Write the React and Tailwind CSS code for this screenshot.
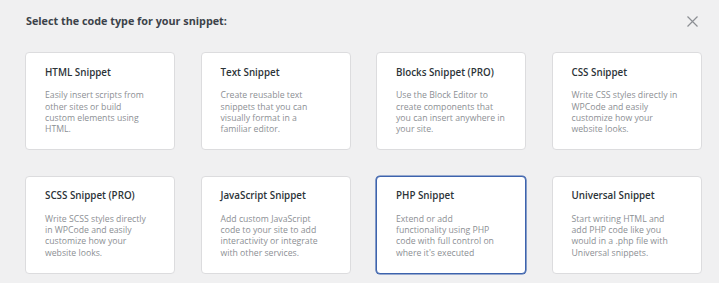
import React from 'react';

const SNIPPETS = [
  { title: 'HTML Snippet', lines: ['Easily insert scripts from', 'other sites or build', 'custom elements using', 'HTML.'] },
  { title: 'Text Snippet', lines: ['Create reusable text', 'snippets that you can', 'visually format in a', 'familiar editor.'] },
  { title: 'Blocks Snippet (PRO)', lines: ['Use the Block Editor to', 'create components that', 'you can insert anywhere in', 'your site.'] },
  { title: 'CSS Snippet', lines: ['Write CSS styles directly in', 'WPCode and easily', 'customize how your', 'website looks.'] },
  { title: 'SCSS Snippet (PRO)', lines: ['Write SCSS styles directly', 'in WPCode and easily', 'customize how your', 'website looks.'] },
  { title: 'JavaScript Snippet', lines: ['Add custom JavaScript', 'code to your site to add', 'interactivity or integrate', 'with other services.'] },
  { title: 'PHP Snippet', lines: ['Extend or add', 'functionality using PHP', 'code with full control on', "where it's executed"], active: true },
  { title: 'Universal Snippet', lines: ['Start writing HTML and', 'add PHP code like you', 'would in a .php file with', 'Universal snippets.'] },
];

function SnippetCard({ title, lines, active }) {
  return (
    <div
      className={
        'h-[98px] rounded-[4px] bg-white pl-[19px] pt-[12.5px] ' +
        (active ? 'border border-[#3d63ad] shadow-[0_0_0_0.6px_#3d63ad]' : 'border border-[#dcdcde]')
      }
    >
      <h3 className="whitespace-nowrap text-[9.8px] font-semibold leading-[14px] text-[#2c3338]">{title}</h3>
      <p className="mt-[10.75px] text-[8.7px] leading-[11.35px] text-[#8c8f94]">
        {lines.map((l) => (
          <span key={l} className="block whitespace-nowrap">{l}</span>
        ))}
      </p>
    </div>
  );
}

export default function App() {
  return (
    <div className="h-[283px] w-[719px] bg-[#f0f0f1] font-['Open_Sans',sans-serif]">
      <div className="flex items-center justify-between pl-[26px] pr-[21px] pt-[12px]">
        <h2 className="text-[10.8px] font-bold leading-[18px] text-[#3c434a]">Select the code type for your snippet:</h2>
        <button className="mt-[1px] text-[#8c8f94]" aria-label="Close">
          <svg width="11" height="11" viewBox="0 0 11 11" fill="none" stroke="currentColor" strokeWidth="1.2">
            <path d="M0.5 0.5l10 10M10.5 0.5l-10 10" />
          </svg>
        </button>
      </div>
      <div className="mt-[22px] grid grid-cols-[repeat(4,150px)] gap-x-[25.5px] gap-y-[25.5px] pl-[25px]">
        {SNIPPETS.map((s) => (
          <SnippetCard key={s.title} {...s} />
        ))}
      </div>
    </div>
  );
}
